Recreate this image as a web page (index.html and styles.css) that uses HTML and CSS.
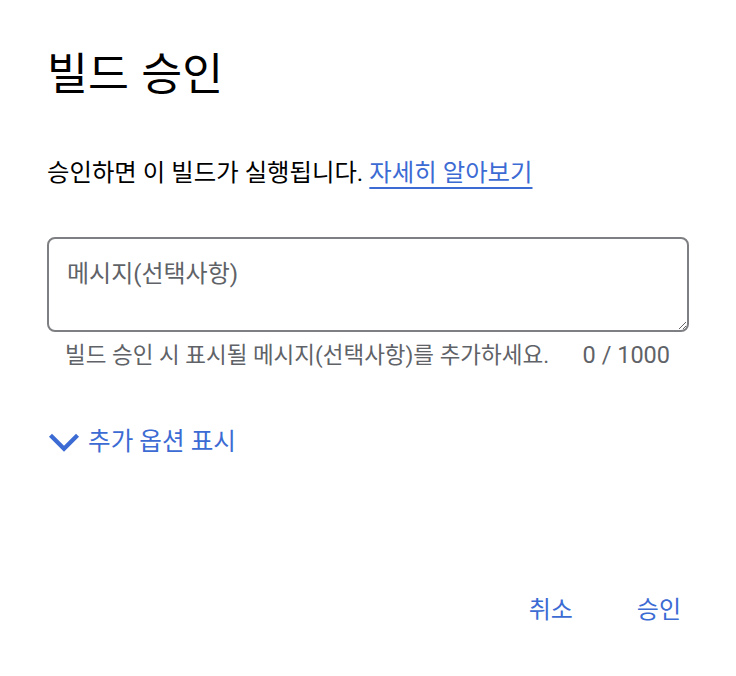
FILE: index.html
```html
<!DOCTYPE html>
<html lang="ko">
<head>
    <meta charset="UTF-8">
    <meta name="viewport" content="width=device-width, initial-scale=1.0">
    <title>빌드 승인</title>
    <link rel="stylesheet" href="styles.css">
</head>
<body>
    <div class="dialog">
        <h1 class="title">빌드 승인</h1>

        <p class="desc">승인하면 이 빌드가 실행됩니다. <a class="link" href="#">자세히 알아보기</a></p>

        <div class="field">
            <textarea class="message" placeholder="메시지(선택사항)"></textarea>
            <div class="hint-row">
                <span class="hint">빌드 승인 시 표시될 메시지(선택사항)를 추가하세요.</span>
                <span class="counter">0 / 1000</span>
            </div>
        </div>

        <button class="more-btn">
            <svg class="chevron" xmlns="http://www.w3.org/2000/svg" viewBox="0 0 24 24" fill="none" stroke="currentColor" stroke-width="3.2" stroke-linecap="square">
                <path d="M3 8l9 9 9-9"></path>
            </svg>
            추가 옵션 표시
        </button>

        <div class="actions">
            <button class="action-btn">취소</button>
            <button class="action-btn">승인</button>
        </div>
    </div>
</body>
</html>
```

FILE: styles.css
```css
:root {
    --text-primary: #202124;
    --text-secondary: #5f6368;
    --accent: #3c6bd4;
    --border: #7d7f82;
}

* {
    margin: 0;
    padding: 0;
    box-sizing: border-box;
}

body {
    font-family: Roboto, "Noto Sans CJK KR", sans-serif;
    background: #fff;
    color: var(--text-primary);
    width: 736px;
    height: 676px;
}

.dialog {
    display: flex;
    flex-direction: column;
    padding: 41px 47px 0 47px;
    height: 100%;
}

.title {
    font-family: "Noto Sans CJK KR", sans-serif;
    font-weight: 400;
    font-size: 44.5px;
    line-height: 60px;
    color: #000;
}

.desc {
    margin-top: 55px;
    font-size: 24.4px;
    line-height: 34px;
    color: #000;
}

.link {
    color: var(--accent);
    text-decoration: underline;
    text-underline-offset: 6px;
    text-decoration-thickness: 2px;
}

.field {
    margin-top: 47px;
}

.message {
    display: block;
    width: 100%;
    height: 95px;
    border: 2px solid var(--border);
    border-radius: 8px;
    padding: 19px 18px 0 18px;
    font-family: Roboto, "Noto Sans CJK KR", sans-serif;
    font-size: 24px;
    line-height: 32px;
    color: var(--text-primary);
    resize: vertical;
    outline: none;
}

.message::placeholder {
    color: var(--text-secondary);
}

.hint-row {
    display: flex;
    justify-content: space-between;
    align-items: baseline;
    padding: 8px 19px 0 18px;
    line-height: 30px;
    color: var(--text-secondary);
}

.hint {
    font-size: 22.5px;
}

.counter {
    font-size: 23.5px;
}

.more-btn {
    margin-top: 55px;
    align-self: flex-start;
    display: flex;
    align-items: center;
    gap: 8px;
    background: none;
    border: none;
    font-family: Roboto, "Noto Sans CJK KR", sans-serif;
    font-size: 24.6px;
    font-weight: 400;
    line-height: 34px;
    color: var(--accent);
    padding-left: 1px;
    cursor: pointer;
}

.chevron {
    width: 32px;
    height: 32px;
}

.actions {
    margin-top: 134px;
    display: flex;
    justify-content: flex-end;
    gap: 64px;
    padding-right: 8px;
}

.action-btn {
    background: none;
    border: none;
    font-family: Roboto, "Noto Sans CJK KR", sans-serif;
    font-size: 24px;
    font-weight: 400;
    line-height: 34px;
    color: var(--accent);
    cursor: pointer;
}
```
